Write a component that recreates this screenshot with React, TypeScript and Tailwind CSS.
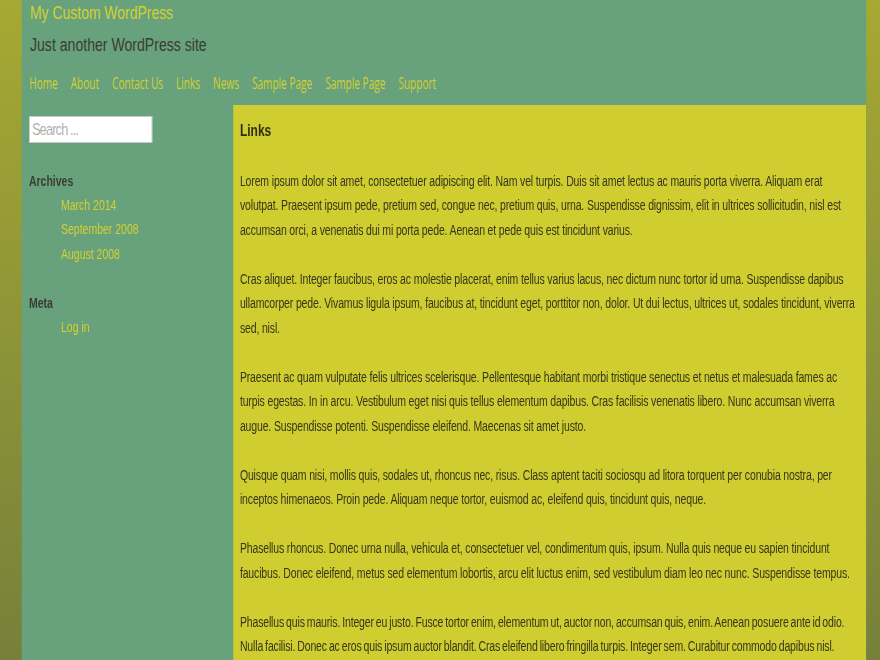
const navItems = ['Home', 'About', 'Contact Us', 'Links', 'News', 'Sample Page', 'Sample Page', 'Support'];

const archives = ['March 2014', 'September 2008', 'August 2008'];

const paragraphs = [
  'Lorem ipsum dolor sit amet, consectetuer adipiscing elit. Nam vel turpis. Duis sit amet lectus ac mauris porta viverra. Aliquam erat volutpat. Praesent ipsum pede, pretium sed, congue nec, pretium quis, urna. Suspendisse dignissim, elit in ultrices sollicitudin, nisl est accumsan orci, a venenatis dui mi porta pede. Aenean et pede quis est tincidunt varius.',
  'Cras aliquet. Integer faucibus, eros ac molestie placerat, enim tellus varius lacus, nec dictum nunc tortor id urna. Suspendisse dapibus ullamcorper pede. Vivamus ligula ipsum, faucibus at, tincidunt eget, porttitor non, dolor. Ut dui lectus, ultrices ut, sodales tincidunt, viverra sed, nisl.',
  'Praesent ac quam vulputate felis ultrices scelerisque. Pellentesque habitant morbi tristique senectus et netus et malesuada fames ac turpis egestas. In in arcu. Vestibulum eget nisi quis tellus elementum dapibus. Cras facilisis venenatis libero. Nunc accumsan viverra augue. Suspendisse potenti. Suspendisse eleifend. Maecenas sit amet justo.',
  'Quisque quam nisi, mollis quis, sodales ut, rhoncus nec, risus. Class aptent taciti sociosqu ad litora torquent per conubia nostra, per inceptos himenaeos. Proin pede. Aliquam neque tortor, euismod ac, eleifend quis, tincidunt quis, neque.',
  'Phasellus rhoncus. Donec urna nulla, vehicula et, consectetuer vel, condimentum quis, ipsum. Nulla quis neque eu sapien tincidunt faucibus. Donec eleifend, metus sed elementum lobortis, arcu elit luctus enim, sed vestibulum diam leo nec nunc. Suspendisse tempus.',
  'Phasellus quis mauris. Integer eu justo. Fusce tortor enim, elementum ut, auctor non, accumsan quis, enim. Aenean posuere ante id odio. Nulla facilisi. Donec ac eros quis ipsum auctor blandit. Cras eleifend libero fringilla turpis. Integer sem. Curabitur commodo dapibus nisl. Nunc sollicitudin, massa eu mollis convallis, lorem elit porta urna.',
];

// the theme renders everything in a narrow face; the page is drawn wide and squeezed to 0.75
export default function App() {
  return (
    <div className="w-[880px] h-[660px] overflow-hidden bg-gradient-to-b from-[#a6a932] to-[#77803a]">
      <div className="w-[1173.3px] h-[660px] origin-top-left scale-x-[0.75] pl-[29.3px] font-['Liberation_Sans',Arial,sans-serif]">
        <div className="w-[1125.3px] h-full bg-[#67a27c] flex flex-col">
          {/* Header */}
          <header className="pl-[10.7px]">
            <h1 className="text-[18.6px] leading-[26px] text-[#d4d030]">My Custom WordPress</h1>
            <p className="text-[18.8px] leading-[26px] text-[#3c3c35] mt-[6px]">Just another WordPress site</p>
          </header>
          <nav className="pl-[9.3px] mt-[14px] pb-[11px]">
            <ul className="flex gap-[20.6px] w-max origin-left scale-x-[0.84] font-['Open_Sans',sans-serif] font-normal text-[16px] leading-[22px] text-[#d4d030]">
              {navItems.map((item, i) => (
                <li key={i}>
                  <a href="#">{item}</a>
                </li>
              ))}
            </ul>
          </nav>

          <div className="flex flex-1">
            {/* Sidebar */}
            <aside className="w-[281.3px] shrink-0 px-[9.3px] pt-[11px]">
              <input
                type="text"
                placeholder="Search ..."
                className="block w-[164px] h-[27px] bg-white border border-[#c8c8c8] px-[3px] text-[17px] tracking-[-1.1px] text-[#555] placeholder:text-[#b0b0b0] outline-none"
              />
              <h3 className="mt-[25.5px] text-[14px] font-bold text-[#3c3c35] leading-[24px]">Archives</h3>
              <ul className="pl-[42.7px] text-[14px] leading-[24.5px] text-[#d4d030]">
                {archives.map((a) => (
                  <li key={a}>
                    <a href="#">{a}</a>
                  </li>
                ))}
              </ul>
              <h3 className="mt-[25px] text-[14px] font-bold text-[#3c3c35] leading-[24px]">Meta</h3>
              <ul className="pl-[42.7px] text-[14px] leading-[24.5px] text-[#d4d030]">
                <li>
                  <a href="#">Log in</a>
                </li>
              </ul>
            </aside>

            {/* Content */}
            <main className="flex-1 bg-[#cfcd30] px-[9.3px] pt-[14px] text-[#38361b]">
              <h2 className="text-[16px] font-bold leading-[24px] text-[#2e2d17]">Links</h2>
              <div className="mt-[25.5px] flex flex-col gap-[24.5px] text-[14px] tracking-[-0.2px] leading-[24.5px]">
                {paragraphs.map((p, i) => (
                  <p key={i} className={i === 5 ? '[word-spacing:-1px]' : ''}>
                    {p}
                  </p>
                ))}
              </div>
            </main>
          </div>
        </div>
      </div>
    </div>
  );
}
